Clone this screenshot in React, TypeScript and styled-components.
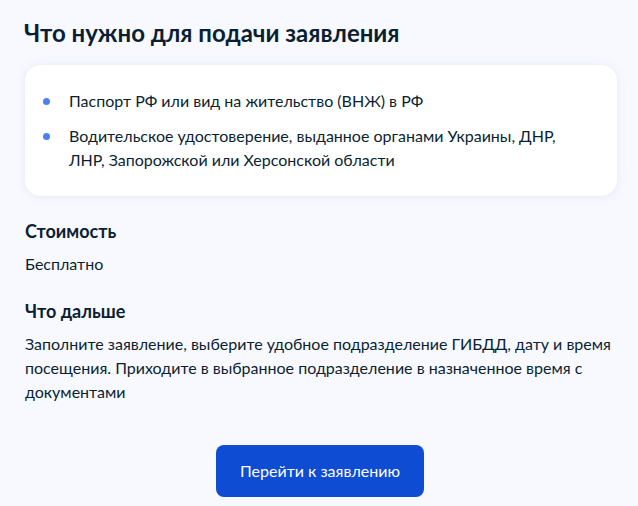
import React from "react";
import styled, { createGlobalStyle } from "styled-components";

const GlobalStyle = createGlobalStyle`
  html, body {
    margin: 0;
    padding: 0;
    background: #f8f9fe;
  }
  body {
    font-family: Lato, "Noto Sans", sans-serif;
    color: #0b1f33;
    -webkit-font-smoothing: antialiased;
  }
  * { box-sizing: border-box; }
`;

const Page = styled.main`
  display: flex;
  flex-direction: column;
  padding: 17px 21px 0 25px;
`;

const Title = styled.h1`
  margin: 0;
  font-size: 24px;
  line-height: 32px;
  font-weight: 700;
  color: #0b1f33;
  margin-left: -1px;
`;

const Card = styled.div`
  margin-top: 16px;
  background: #ffffff;
  border-radius: 16px;
  box-shadow: 0 1px 4px rgba(233, 236, 250, 0.9), 0 0 12px rgba(225, 230, 248, 0.6);
  padding: 24px 24px 24px 18px;
`;

const List = styled.ul`
  list-style: none;
  margin: 0;
  padding: 0;
  display: flex;
  flex-direction: column;
  gap: 11px;
`;

const Item = styled.li`
  display: flex;
  align-items: flex-start;
  gap: 19px;
  font-size: 16px;
  line-height: 24px;
`;

const Dot = styled.span`
  flex: none;
  width: 7px;
  height: 7px;
  border-radius: 50%;
  background: #4e80f4;
  margin-top: 9px;
`;

const Section = styled.section<{ $top: number }>`
  margin-top: ${(p) => p.$top}px;
  display: flex;
  flex-direction: column;
  gap: 9px;
`;

const Heading = styled.h2`
  margin: 0;
  font-size: 18px;
  line-height: 24px;
  font-weight: 700;
`;

const Text = styled.p`
  margin: 0;
  font-size: 16px;
  line-height: 24px;
  max-width: 600px;
`;

const Actions = styled.div`
  display: flex;
  justify-content: center;
  margin-top: 41px;
  padding-right: 2px;
`;

const Button = styled.button`
  height: 52px;
  padding: 0 24px;
  border: none;
  border-radius: 8px;
  background: #0d4cd3;
  color: #ffffff;
  font-family: Lato, "Noto Sans", sans-serif;
  font-size: 16px;
  line-height: 24px;
  font-weight: 400;
  cursor: pointer;
`;

export default function App() {
  return (
    <>
      <GlobalStyle />
      <Page>
        <Title>Что нужно для подачи заявления</Title>
        <Card>
          <List>
            <Item>
              <Dot />
              <span>Паспорт РФ или вид на жительство (ВНЖ) в РФ</span>
            </Item>
            <Item>
              <Dot />
              <span>
                Водительское удостоверение, выданное органами Украины, ДНР,
                <br />
                ЛНР, Запорожской или Херсонской области
              </span>
            </Item>
          </List>
        </Card>
        <Section $top={23}>
          <Heading>Стоимость</Heading>
          <Text>Бесплатно</Text>
        </Section>
        <Section $top={23}>
          <Heading>Что дальше</Heading>
          <Text>
            Заполните заявление, выберите удобное подразделение ГИБДД, дату и время
            посещения. Приходите в выбранное подразделение в назначенное время с
            документами
          </Text>
        </Section>
        <Actions>
          <Button>Перейти к заявлению</Button>
        </Actions>
      </Page>
    </>
  );
}
